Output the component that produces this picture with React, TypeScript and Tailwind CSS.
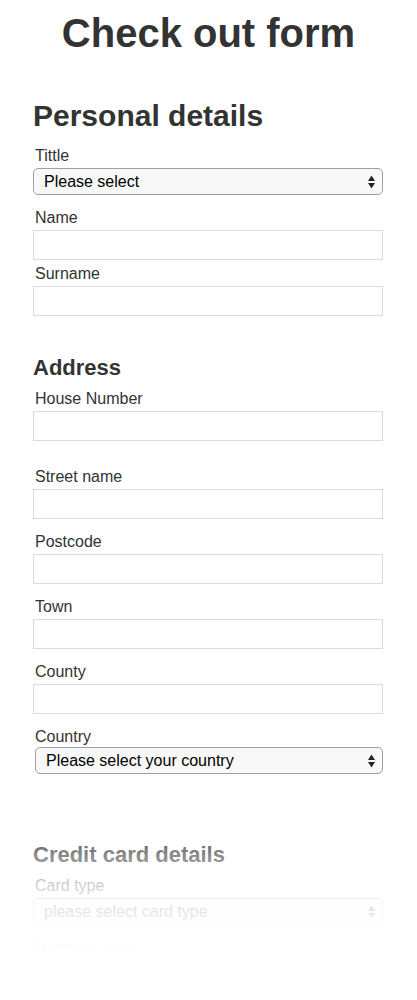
import React from 'react'

const SelectArrows = () => (
    <svg width="7" height="13" viewBox="0 0 7 13" className="pointer-events-none absolute right-[8px] top-1/2 -translate-y-1/2">
        <path d="M0 5.5 L3.5 0 L7 5.5 Z" fill="#222" />
        <path d="M0 7.5 L7 7.5 L3.5 13 Z" fill="#222" />
    </svg>
)

function Label({ text, className }: { text: string; className: string }) {
    return <label className={`block pl-[2px] text-[16px] leading-[20px] ${className}`}>{text}</label>
}

function TextInput() {
    return <input type="text" className="block h-[30px] w-full border border-[#dcdcdc] bg-white outline-none" />
}

function Select({ placeholder, className = '' }: { placeholder: string; className?: string }) {
    return (
        <div className={`relative ${className}`}>
            <select
                defaultValue=""
                className="block h-[27px] w-full appearance-none rounded-[5px] border border-[#a0a0a0] bg-[#f8f8f8] pl-[10px] text-[16px] text-black outline-none"
            >
                <option value="">{placeholder}</option>
            </select>
            <SelectArrows />
        </div>
    )
}

export default function App() {
    return (
        <div className="relative h-[1000px] overflow-hidden bg-white font-['Liberation_Sans',Arial,sans-serif] text-[#333]">
            <h1 className="pt-[10px] text-center text-[40px] leading-[46px] font-bold">Check out form</h1>

            <form className="ml-[33px] w-[350px]">
                {/* Personal details */}
                <h2 className="mt-[43px] text-[30px] leading-[34px] font-bold">Personal details</h2>
                <Label text="Tittle" className="mt-[13px] mb-[2px]" />
                <Select placeholder="Please select" />
                <Label text="Name" className="mt-[13px] mb-[2px]" />
                <TextInput />
                <Label text="Surname" className="mt-[4px] mb-[2px]" />
                <TextInput />

                {/* Address */}
                <h3 className="mt-[39px] text-[22px] leading-[26px] font-bold">Address</h3>
                <Label text="House Number" className="mt-[8px] mb-[2px]" />
                <TextInput />
                <Label text="Street name" className="mt-[26px] mb-[2px]" />
                <TextInput />
                <Label text="Postcode" className="mt-[13px] mb-[2px]" />
                <TextInput />
                <Label text="Town" className="mt-[13px] mb-[2px]" />
                <TextInput />
                <Label text="County" className="mt-[13px] mb-[2px]" />
                <TextInput />
                <Label text="Country" className="mt-[13px]" />
                <Select placeholder="Please select your country" className="ml-[2px]" />

                {/* Credit card */}
                <h3 className="mt-[68px] text-[22px] leading-[26px] font-bold">Credit card details</h3>
                <Label text="Card type" className="mt-[8px] mb-[2px]" />
                <Select placeholder="please select card type" />
                <Label text="Name on card" className="mt-[13px] mb-[2px]" />
                <TextInput />
            </form>

            {/* fade out at the bottom */}
            <div className="pointer-events-none absolute inset-x-0 bottom-0 h-[200px] bg-[linear-gradient(to_bottom,rgba(255,255,255,0)_10%,rgba(255,255,255,0.42)_27.5%,rgba(255,255,255,0.77)_43%,rgba(255,255,255,0.89)_55%,rgba(255,255,255,0.975)_70%,#fff_78%)]" />
        </div>
    )
}
